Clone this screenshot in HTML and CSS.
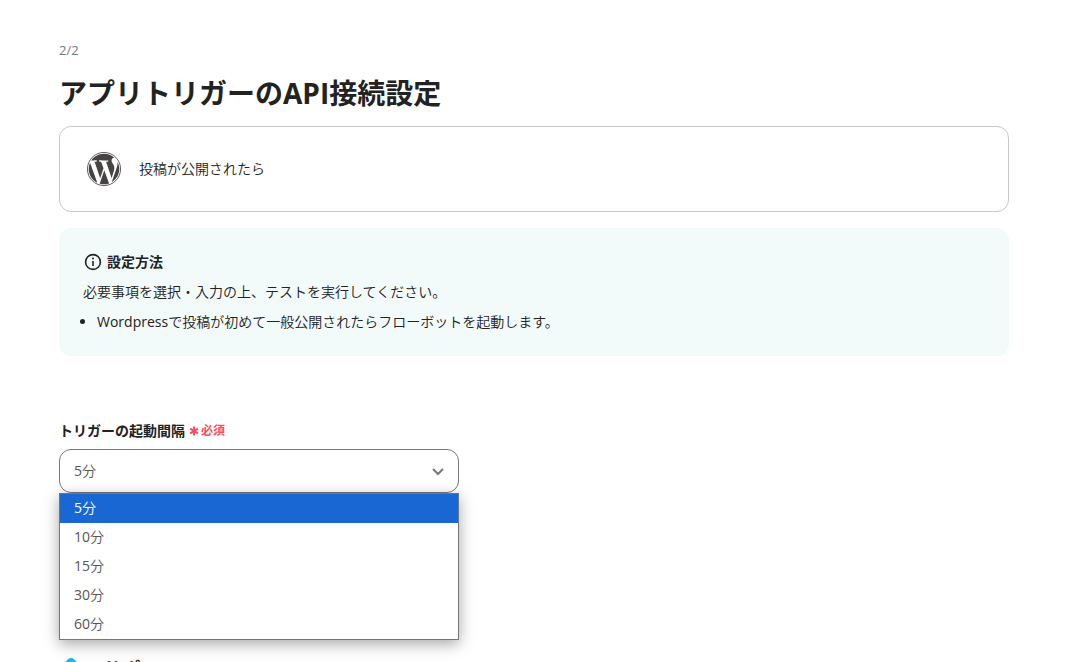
FILE: index.html
```
<!DOCTYPE html>
<html lang="ja">
<head>
    <meta charset="UTF-8">
    <meta name="viewport" content="width=device-width, initial-scale=1.0">
    <title>アプリトリガーのAPI接続設定</title>
    <link rel="stylesheet" href="styles.css">
</head>
<body>
    <main class="page">
        <p class="step">2/2</p>
        <h1>アプリトリガーのAPI接続設定</h1>

        <div class="trigger">
            <svg class="trigger-logo" viewBox="0 0 24 24" aria-hidden="true">
                <circle cx="12" cy="12" r="11.7" fill="none" stroke="#464342" stroke-width="0.6"/>
                <path fill="#464342" d="M21.469 6.825c.84 1.537 1.318 3.3 1.318 5.175 0 3.979-2.156 7.456-5.363 9.325l3.295-9.527c.615-1.54.82-2.771.82-3.864 0-.405-.026-.78-.07-1.11m-7.981.105c.647-.03 1.232-.105 1.232-.105.582-.075.514-.93-.067-.899 0 0-1.755.135-2.88.135-1.064 0-2.85-.15-2.85-.15-.585-.03-.661.855-.075.885 0 0 .54.061 1.125.09l1.68 4.605-2.37 7.08L5.354 6.9c.649-.03 1.234-.1 1.234-.1.585-.075.516-.93-.065-.896 0 0-1.746.138-2.874.138-.2 0-.438-.008-.69-.015C4.911 3.15 8.235 1.215 12 1.215c2.809 0 5.365 1.072 7.286 2.833-.046-.003-.091-.009-.141-.009-1.06 0-1.812.923-1.812 1.914 0 .89.513 1.643 1.06 2.531.411.72.89 1.643.89 2.977 0 .915-.354 1.994-.821 3.479l-1.075 3.585-3.9-11.61.001.014zM12 22.784c-1.059 0-2.081-.153-3.048-.437l3.237-9.406 3.315 9.087c.024.053.05.101.078.149-1.12.393-2.325.609-3.582.609M1.211 12c0-1.564.336-3.05.935-4.39L7.29 21.709C3.694 19.96 1.212 16.271 1.211 12z"/>
            </svg>
            <span>投稿が公開されたら</span>
        </div>

        <section class="guide">
            <h2>
                <svg class="guide-icon" viewBox="0 0 20 20" aria-hidden="true">
                    <circle cx="10" cy="10" r="7.4" fill="none" stroke="#222" stroke-width="1.6"/>
                    <path d="M10 9v5" stroke="#222" stroke-width="1.6"/>
                    <circle cx="10" cy="6.6" r="1" fill="#222"/>
                </svg>
                設定方法
            </h2>
            <p>必要事項を選択・入力の上、テストを実行してください。</p>
            <ul>
                <li>Wordpressで投稿が初めて一般公開されたらフローボットを起動します。</li>
            </ul>
        </section>

        <div class="field">
            <label for="interval">トリガーの起動間隔 <span class="required"><svg viewBox="0 0 10 10" aria-hidden="true"><path d="M5 0.5v9M1.1 2.7l7.8 4.6M8.9 2.7l-7.8 4.6"/></svg>必須</span></label>
            <div class="select">
                <select id="interval">
                    <option>5分</option>
                    <option>10分</option>
                    <option>15分</option>
                    <option>30分</option>
                    <option>60分</option>
                </select>
                <svg class="chevron" viewBox="0 0 12 8" aria-hidden="true">
                    <path d="M1 1l5 5 5-5"/>
                </svg>
                <ul class="menu" role="listbox" aria-label="トリガーの起動間隔">
                    <li class="selected" role="option" aria-selected="true">5分</li>
                    <li role="option">10分</li>
                    <li role="option">15分</li>
                    <li role="option">30分</li>
                    <li role="option">60分</li>
                </ul>
            </div>
        </div>

        <h2 class="support">
            <svg class="support-icon" viewBox="0 0 24 24" aria-hidden="true">
                <path fill="#16b9e8" d="M9 1.2a5 5 0 0 1 6 0l7 6.8a5 5 0 0 1 0 8l-7 6.8a5 5 0 0 1-6 0L2 16a5 5 0 0 1 0-8z"/>
            </svg>
            サポート
        </h2>
    </main>
</body>
</html>
```
FILE: styles.css
```
body {
    margin: 0;
    font-family: "Open Sans", "Noto Sans CJK JP DemiLight", "Noto Sans CJK JP", sans-serif;
    font-size: 14px;
    line-height: 24px;
    color: #222;
    background: #fff;
    height: 100vh;
    overflow: hidden;
}
h1, h2, p, ul {
    margin: 0;
}
h1, h2, label {
    font-family: "Open Sans", "Noto Sans CJK JP", sans-serif;
}
.page {
    padding: 38px 73px 0 59px;
}
.step {
    color: #777;
    font-size: 13px;
}
h1 {
    margin-top: 10px;
    font-size: 28px;
    line-height: 42px;
}
.trigger {
    display: flex;
    align-items: center;
    gap: 18px;
    margin-top: 12px;
    padding: 25px 27px;
    border: 1px solid #c8c8c8;
    border-radius: 12px;
}
.trigger-logo {
    width: 34px;
    height: 34px;
}
.guide {
    margin-top: 16px;
    padding: 22px 24px;
    border-radius: 12px;
    background: #f2fafa;
}
.guide h2 {
    display: flex;
    align-items: center;
    gap: 4px;
    font-size: 14px;
}
.guide-icon {
    width: 20px;
    height: 20px;
}
.guide p {
    margin-top: 6px;
}
.guide ul {
    margin-top: 6px;
    padding-left: 14px;
}
.field {
    margin-top: 63px;
}
.field label {
    display: flex;
    align-items: center;
    gap: 4px;
    font-weight: bold;
}
.required {
    display: flex;
    align-items: center;
    gap: 2px;
    color: #ff4b5f;
    font-size: 12px;
}
.required svg {
    width: 10px;
    height: 10px;
    fill: none;
    stroke: #ff4b5f;
    stroke-width: 2;
}
.select {
    position: relative;
    max-width: 400px;
    margin-top: 6px;
}
select {
    display: block;
    width: 100%;
    height: 44px;
    padding: 0 14px;
    border: 1px solid #777;
    border-radius: 12px;
    appearance: none;
    background: #fff;
    color: #555;
    font: inherit;
}
.chevron {
    position: absolute;
    top: 19px;
    right: 15px;
    width: 12px;
    height: 8px;
    fill: none;
    stroke: #777;
    stroke-width: 2;
}
.menu {
    position: absolute;
    top: 100%;
    left: 0;
    right: 0;
    padding: 0;
    border: 1px solid #767676;
    background: #fff;
    box-shadow: 0 4px 14px rgba(0, 0, 0, 0.35);
    list-style: none;
    color: #555;
}
.menu li {
    padding: 0 14px 2px;
    line-height: 27px;
}
.menu .selected {
    background: #1967d2;
    color: #fff;
}
.support {
    display: flex;
    align-items: center;
    gap: 20px;
    margin-top: 159px;
    font-size: 19px;
    line-height: 36px;
}
.support-icon {
    width: 24px;
    height: 24px;
}
```
